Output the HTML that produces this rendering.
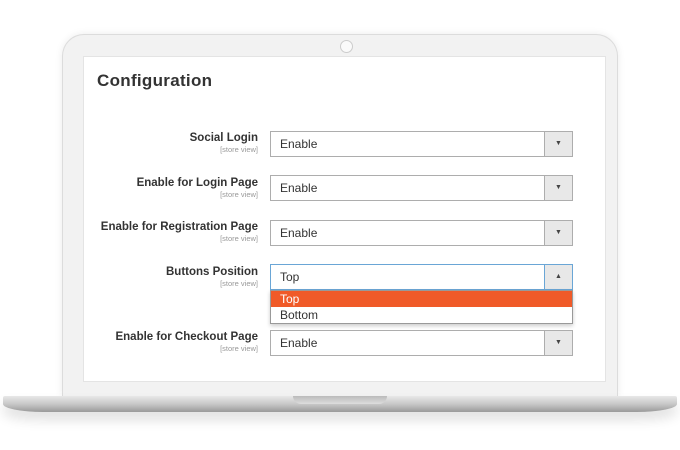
<!DOCTYPE html><html><head><style>
body{margin:0;width:680px;height:450px;background:#fff;position:relative;overflow:hidden;font-family:"Liberation Sans",sans-serif}
.lid{position:absolute;left:62px;top:34px;width:554px;height:362px;background:#f2f2f2;border:1px solid #dcdcdc;border-bottom:0;border-radius:22px 22px 0 0;box-shadow:0 0 8px rgba(0,0,0,.08)}
.cam{position:absolute;left:340px;top:40px;width:11px;height:11px;border-radius:50%;background:#fafafa;border:1px solid #ccc}
.scr{position:absolute;left:83px;top:56px;width:521px;height:324px;background:#fff;border:1px solid #e4e4e4}
h1{position:absolute;left:97px;top:71px;margin:0;font-size:17px;font-weight:bold;color:#333;letter-spacing:.3px}
.lab{position:absolute;right:422px;text-align:right;color:#333;font-size:11.5px;font-weight:bold}
.lab small{display:block;font-size:7.5px;color:#999;font-weight:normal;margin-top:1px}
.sel{position:absolute;left:270px;width:303px;height:26px;border:1px solid #adadad;background:#fff;font-size:12px;color:#333;box-sizing:border-box;line-height:24px;padding-left:9px}
.sel b{position:absolute;right:0;top:0;width:27px;height:24px;border-left:1px solid #adadad;background:#e8e8e8;font-size:7px;text-align:center;line-height:24px;color:#444;font-weight:normal}
.base{position:absolute;left:3px;top:396px;width:674px;height:16px;background:linear-gradient(#e8e8e8,#c8c8c8 50%,#9a9a9a);border-radius:2px 2px 40px 40px/2px 2px 8px 8px;box-shadow:0 8px 12px rgba(0,0,0,.12)}
.notch{position:absolute;left:293px;top:396px;width:94px;height:8px;background:linear-gradient(#bbb,#ddd);border-radius:0 0 8px 8px}
</style></head><body>
<div class="lid"></div><div class="cam"></div><div class="scr"></div>
<h1>Configuration</h1>
<div class="lab" style="top:132px">Social Login<small>[store view]</small></div>
<div class="sel" style="top:131px">Enable<b>▼</b></div>
<div class="lab" style="top:177px">Enable for Login Page<small>[store view]</small></div>
<div class="sel" style="top:175px">Enable<b>▼</b></div>
<div class="lab" style="top:221px">Enable for Registration Page<small>[store view]</small></div>
<div class="sel" style="top:220px">Enable<b>▼</b></div>
<div class="lab" style="top:266px">Buttons Position<small>[store view]</small></div>
<div class="sel" style="top:264px;border-color:#6aa6d6">Top<b style="border-color:#6aa6d6">▲</b></div>
<div style="position:absolute;left:270px;top:290px;width:303px;height:34px;border:1px solid #999;box-sizing:border-box;background:#fff;font-size:12px;color:#333;box-shadow:0 2px 4px rgba(0,0,0,.2)">
<div style="background:#f05a28;color:#fff;height:16px;line-height:16px;padding-left:9px">Top</div>
<div style="height:16px;line-height:16px;padding-left:9px">Bottom</div></div>
<div class="lab" style="top:331px">Enable for Checkout Page<small>[store view]</small></div>
<div class="sel" style="top:330px">Enable<b>▼</b></div>
<div class="base"></div><div class="notch"></div>
</body></html>
